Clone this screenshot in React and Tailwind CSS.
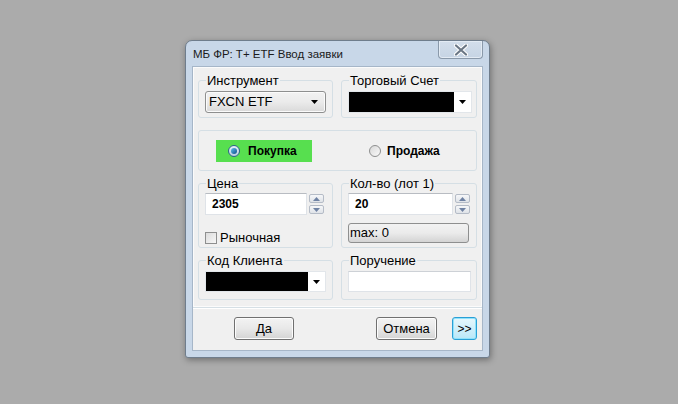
import React from "react";

const font = { fontFamily: '"Liberation Sans", Arial, sans-serif' };

function DropArrow() {
    return (
        <svg width="7" height="4" viewBox="0 0 7 4" className="shrink-0">
            <path d="M0 0h7L3.5 4z" fill="#000" />
        </svg>
    );
}

function SpinArrow({ up }) {
    return (
        <svg width="7" height="4" viewBox="0 0 7 4">
            <path d={up ? "M0 4h7L3.5 0z" : "M0 0h7L3.5 4z"} fill="#6f82a3" />
        </svg>
    );
}

function Spinner() {
    return (
        <div className="ml-[2px] flex flex-col gap-[2px] pt-[1px]">
            <button className="flex h-[9px] w-[15px] items-center justify-center rounded-[2px] border border-[#b5bcc7] bg-gradient-to-b from-[#f6f7f9] to-[#dfe3e8]">
                <SpinArrow up />
            </button>
            <button className="flex h-[9px] w-[15px] items-center justify-center rounded-[2px] border border-[#b5bcc7] bg-gradient-to-b from-[#f6f7f9] to-[#dfe3e8]">
                <SpinArrow />
            </button>
        </div>
    );
}

function Group({ label, className, children }) {
    return (
        <fieldset
            className={
                "min-w-0 rounded-[3px] border border-[#d5dfe5] px-[6px] " +
                className
            }
        >
            {label && (
                <legend className="ml-[1px] px-[1px] text-[13px] leading-[15px] text-[#000]">
                    {label}
                </legend>
            )}
            {children}
        </fieldset>
    );
}

function Button({ children, width, focused }) {
    return (
        <button
            className={
                "flex h-[23px] items-center justify-center rounded-[3px] border text-[13px] text-black " +
                width +
                (focused
                    ? " border-[#2a9fd6] bg-gradient-to-b from-[#e6f7fd] to-[#b9e7f8] shadow-[inset_0_0_0_1px_#8fe2fb]"
                    : " border-[#707070] bg-gradient-to-b from-[#f3f3f3] via-[#e8e8e8] to-[#d4d4d4] shadow-[inset_0_0_0_1px_#fcfcfc]")
            }
        >
            {children}
        </button>
    );
}

function App() {
    return (
        <div
            className="h-[404px] w-[678px] bg-[#ababab] pl-[185px] pt-[40px]"
            style={font}
        >
            {/* Window */}
            <div className="flex h-[318px] w-[305px] flex-col rounded-t-[7px] rounded-b-[3px] border border-[#6f7d8c] bg-[#c8d7e8] shadow-[1px_2px_6px_rgba(0,0,0,0.35)]">
                {/* Title bar */}
                <div className="flex h-[25px] items-start justify-between pl-[7px] pr-[6px]">
                    <span className="mt-[5px] text-[11.5px] text-[#1b1b1b]">
                        МБ ФР: Т+ ETF Ввод заявки
                    </span>
                    <button className="flex h-[18px] w-[45px] items-center justify-center rounded-b-[4px] border border-t-0 border-[#8a99aa] bg-gradient-to-b from-[#d3deeb] to-[#c6d4e4] shadow-[inset_0_0_0_1px_#e3ebf4]">
                        <svg width="14" height="12" viewBox="0 0 14 12">
                            <path
                                d="M2 1.5l10 9M12 1.5l-10 9"
                                stroke="#fff"
                                strokeWidth="4.2"
                                strokeLinecap="round"
                            />
                            <path
                                d="M2 1.5l10 9M12 1.5l-10 9"
                                stroke="#6b7785"
                                strokeWidth="2.2"
                                strokeLinecap="round"
                            />
                        </svg>
                    </button>
                </div>

                {/* Client area */}
                <div className="mx-[6px] mb-[6px] flex flex-1 flex-col border border-[#a6b6c8] bg-[#f0f0f0]">
                    <div className="flex flex-col border-b border-[#d5dfe5] px-[5px] pt-[6px] pb-[7px] shadow-[inset_0_0_0_1px_#fbfbfb]">
                        {/* Row 1 */}
                        <div className="flex gap-[8px]">
                            <Group label="Инструмент" className="h-[45px] w-[135px]">
                                <div className="mt-[3px] flex h-[22px] w-[121px] items-center justify-between rounded-[3px] border border-[#8e8f8f] bg-gradient-to-b from-[#f2f2f2] via-[#ebebeb] to-[#d9d9d9] pl-[3px] pr-[7px] shadow-[inset_0_0_0_1px_#fbfbfb]">
                                    <span className="text-[13px]">FXCN ETF</span>
                                    <DropArrow />
                                </div>
                            </Group>
                            <Group label="Торговый Счет" className="h-[45px] w-[136px]">
                                <div className="mt-[3px] flex h-[22px] w-[124px] items-center border border-[#e2e6ea] bg-white pr-[5px]">
                                    <div className="h-full w-[105px] bg-black" />
                                    <div className="flex flex-1 justify-end">
                                        <DropArrow />
                                    </div>
                                </div>
                            </Group>
                        </div>

                        {/* Row 2: buy / sell */}
                        <div className="mt-[12px] flex h-[41px] items-center rounded-[3px] border border-[#d5dfe5] pl-[17px]">
                            <div className="flex h-[22px] w-[96px] items-center bg-[#57df4f] pl-[12px]">
                                <span className="flex h-[12px] w-[12px] items-center justify-center rounded-full border border-[#2c628b] bg-gradient-to-b from-[#e9f2f9] to-[#b7cde0]">
                                    <span className="h-[6px] w-[6px] rounded-full bg-gradient-to-br from-[#5fc0f0] to-[#0d4f8a]" />
                                </span>
                                <span className="ml-[8px] text-[12px] font-bold">
                                    Покупка
                                </span>
                            </div>
                            <div className="ml-[57px] flex items-center">
                                <span className="h-[12px] w-[12px] rounded-full border border-[#8e8f8f] bg-gradient-to-br from-[#d8d8d8] to-[#fafafa]" />
                                <span className="ml-[6px] text-[12px] font-bold">
                                    Продажа
                                </span>
                            </div>
                        </div>

                        {/* Row 3 */}
                        <div className="mt-[5px] flex gap-[8px]">
                            <Group label="Цена" className="h-[72px] w-[135px]">
                                <div className="mt-[2px] flex">
                                    <div className="flex h-[22px] w-[102px] items-center border border-[#dfe3e8] border-t-[#b8bcc2] bg-white pl-[6px] text-[12px] font-bold">
                                        2305
                                    </div>
                                    <Spinner />
                                </div>
                                <label className="mt-[13px] flex items-center">
                                    <span className="h-[12px] w-[12px] border border-[#8e8f8f] bg-gradient-to-br from-[#dcdcdc] to-[#f7f7f7]" />
                                    <span className="ml-[3px] text-[13px]">Рыночная</span>
                                </label>
                            </Group>
                            <Group label="Кол-во (лот 1)" className="h-[72px] w-[136px]">
                                <div className="mt-[2px] flex">
                                    <div className="flex h-[22px] w-[105px] items-center border border-[#dfe3e8] border-t-[#b8bcc2] bg-white pl-[6px] text-[12px] font-bold">
                                        20
                                    </div>
                                    <Spinner />
                                </div>
                                <div className="mt-[8px] flex h-[20px] w-[121px] items-center rounded-[3px] border border-[#8e8f8f] bg-gradient-to-b from-[#f2f2f2] via-[#ebebeb] to-[#d4d4d4] pl-[1px] text-[13px]">
                                    max: 0
                                </div>
                            </Group>
                        </div>

                        {/* Row 4 */}
                        <div className="mt-[5px] flex gap-[8px]">
                            <Group label="Код Клиента" className="h-[47px] w-[135px]">
                                <div className="mt-[3px] flex h-[21px] w-[121px] items-center border border-[#e2e6ea] bg-white pr-[5px]">
                                    <div className="h-full w-[102px] bg-black" />
                                    <div className="flex flex-1 justify-end">
                                        <DropArrow />
                                    </div>
                                </div>
                            </Group>
                            <Group label="Поручение" className="h-[47px] w-[136px]">
                                <div className="mt-[3px] h-[21px] w-[123px] border border-[#dfe3e8] border-t-[#cdd1d6] bg-white" />
                            </Group>
                        </div>
                    </div>

                    {/* Buttons */}
                    <div className="flex flex-1 items-start border-t border-white pt-[8px]">
                        <div className="ml-[41px]">
                            <Button width="w-[60px]">Да</Button>
                        </div>
                        <div className="ml-[82px]">
                            <Button width="w-[61px]">Отмена</Button>
                        </div>
                        <div className="ml-[15px]">
                            <Button width="w-[25px]" focused>
                                <span className="text-[12px]">&gt;&gt;</span>
                            </Button>
                        </div>
                    </div>
                </div>
            </div>
        </div>
    );
}

export default App;
